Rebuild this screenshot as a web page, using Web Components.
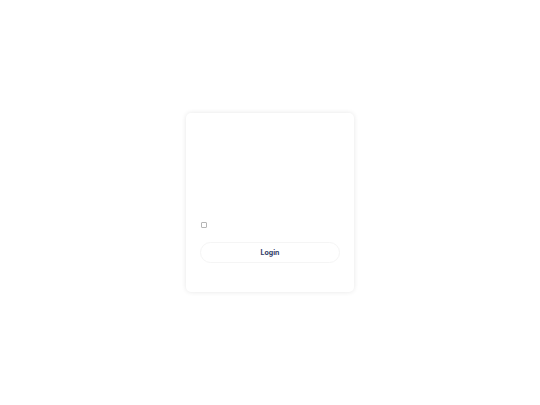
<!DOCTYPE html>
<html lang="en">
<head>
<meta charset="utf-8">
<meta name="viewport" content="width=device-width, initial-scale=1">
<title>Login</title>
<style>
  body {
    margin: 0;
    background: #fff;
    font-family: Inter, "Liberation Sans", sans-serif;
  }
</style>
</head>
<body>
<login-page>
  <login-card>
    <check-box label="Remember me"></check-box>
    <pill-button>Login</pill-button>
  </login-card>
</login-page>

<script>
class LoginPage extends HTMLElement {
  constructor() {
    super();
    const shadow = this.attachShadow({ mode: "open" });
    shadow.innerHTML = `
      <style>
        :host {
          display: grid;
          place-items: center;
          min-height: 100vh;
        }
      </style>
      <slot></slot>
    `;
  }
}

class LoginCard extends HTMLElement {
  constructor() {
    super();
    const shadow = this.attachShadow({ mode: "open" });
    shadow.innerHTML = `
      <style>
        :host {
          display: block;
          box-sizing: border-box;
          width: 168px;
          max-width: 100%;
          border-radius: 5px;
          background: #fff;
          box-shadow: 0 0 5px rgba(0, 0, 0, 0.1);
        }
        form {
          display: flex;
          flex-direction: column;
          gap: 14px;
          padding: 109px 14px 29px;
        }
      </style>
      <form>
        <slot></slot>
      </form>
    `;
  }
}

class CheckBox extends HTMLElement {
  constructor() {
    super();
    const shadow = this.attachShadow({ mode: "open" });
    shadow.innerHTML = `
      <style>
        :host {
          display: flex;
          padding-left: 1px;
        }
        input {
          appearance: none;
          box-sizing: border-box;
          width: 6px;
          height: 6px;
          margin: 0;
          border: 1px solid #b5b5b5;
          border-radius: 1px;
          background: #fff;
        }
        input:checked {
          background: #2b3a67;
        }
      </style>
      <input type="checkbox">
    `;
    shadow.querySelector("input").setAttribute("aria-label", this.getAttribute("label") || "");
  }
}

class PillButton extends HTMLElement {
  constructor() {
    super();
    const shadow = this.attachShadow({ mode: "open" });
    shadow.innerHTML = `
      <style>
        :host {
          display: block;
        }
        button {
          display: block;
          box-sizing: border-box;
          width: 100%;
          height: 21px;
          padding: 0;
          border: 1px solid #f5f5f5;
          border-radius: 11px;
          background: #fff;
          color: #2f3b66;
          font: 700 7px/10px Inter, "Liberation Sans", sans-serif;
          cursor: pointer;
        }
      </style>
      <button type="button"><slot></slot></button>
    `;
  }
}

customElements.define("login-page", LoginPage);
customElements.define("login-card", LoginCard);
customElements.define("check-box", CheckBox);
customElements.define("pill-button", PillButton);
</script>
</body>
</html>
